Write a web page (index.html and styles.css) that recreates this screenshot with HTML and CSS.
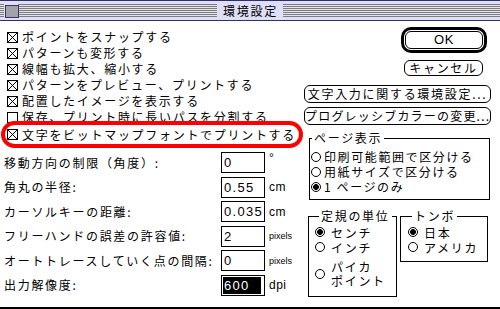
FILE: index.html
```html
<!DOCTYPE html>
<html lang="ja">
<head>
  <meta charset="UTF-8" />
  <title>環境設定</title>
  <link rel="stylesheet" href="styles.css">
</head>
<body>
  <div class="window">
    <div class="titlebar">
      <span class="close-box"></span>
      <span class="title">環境設定</span>
    </div>

    <div class="main">
      <!-- Left: options and values -->
      <div class="left">
        <div class="check"><span class="box on"></span>ポイントをスナップする</div>
        <div class="check"><span class="box on"></span>パターンも変形する</div>
        <div class="check"><span class="box on"></span>線幅も拡大、縮小する</div>
        <div class="check"><span class="box on"></span>パターンをプレビュー、プリントする</div>
        <div class="check"><span class="box on"></span>配置したイメージを表示する</div>
        <div class="check"><span class="box"></span>保存、プリント時に長いパスを分割する</div>
        <div class="check highlight"><span class="box on"></span>文字をビットマップフォントでプリントする</div>

        <div class="fields">
          <div class="field">
            <span class="label">移動方向の制限（角度）:</span>
            <span class="input">0</span>
            <span class="unit deg">°</span>
          </div>
          <div class="field">
            <span class="label">角丸の半径:</span>
            <span class="input">0.55</span>
            <span class="unit">cm</span>
          </div>
          <div class="field">
            <span class="label">カーソルキーの距離:</span>
            <span class="input">0.035</span>
            <span class="unit">cm</span>
          </div>
          <div class="field">
            <span class="label">フリーハンドの誤差の許容値:</span>
            <span class="input">2</span>
            <span class="unit small">pixels</span>
          </div>
          <div class="field">
            <span class="label">オートトレースしていく点の間隔:</span>
            <span class="input">0</span>
            <span class="unit small">pixels</span>
          </div>
          <div class="field">
            <span class="label">出力解像度:</span>
            <span class="input selected"><span class="sel">600</span></span>
            <span class="unit">dpi</span>
          </div>
        </div>
      </div>

      <!-- Right: buttons and groups -->
      <div class="right">
        <div class="ok-ring"><button class="btn ok">OK</button></div>
        <button class="btn cancel">キャンセル</button>
        <button class="btn wide">文字入力に関する環境設定...</button>
        <button class="btn wide tight">プログレッシブカラーの変更...</button>

        <fieldset class="group page">
          <legend>ページ表示</legend>
          <div class="radio"><span class="dot"></span>印刷可能範囲で区分ける</div>
          <div class="radio"><span class="dot"></span>用紙サイズで区分ける</div>
          <div class="radio"><span class="dot on"></span>1 ページのみ</div>
        </fieldset>

        <div class="groups">
          <fieldset class="group units">
            <legend>定規の単位</legend>
            <div class="radio"><span class="dot on"></span>センチ</div>
            <div class="radio"><span class="dot"></span>インチ</div>
            <div class="radio two"><span class="dot"></span><span>パイカ<br>ポイント</span></div>
          </fieldset>
          <fieldset class="group trim">
            <legend>トンボ</legend>
            <div class="radio"><span class="dot on"></span>日本</div>
            <div class="radio"><span class="dot"></span>アメリカ</div>
          </fieldset>
        </div>
      </div>
    </div>

    <div class="bottom-bar"></div>
  </div>
</body>
</html>
```

FILE: styles.css
```css
* { box-sizing: border-box; }
body {
  margin: 0;
  background: #fff;
  color: #000;
  font-family: "Noto Sans CJK JP", sans-serif;
  font-size: 12px;
  letter-spacing: 1.7px;
}

.window {
  width: 500px;
  height: 309px;
  display: flex;
  flex-direction: column;
  overflow: hidden;
}

/* title bar */
.titlebar {
  height: 21px;
  border-top: 1px solid #2e2e70;
  border-bottom: 1px solid #2e2e70;
  background-color: #dedef6;
  background-image: repeating-linear-gradient(to bottom, #7c7c7c 0 1px, #e4e4ee 1px 2px);
  background-size: 100% 13px;
  background-position: 0 3px;
  background-repeat: no-repeat;
  display: grid;
  grid-template-columns: 1fr auto 1fr;
  align-items: center;
}
.close-box {
  justify-self: start;
  margin-left: 4px;
  width: 14px;
  height: 13px;
  padding: 1px;
  background: #dedef6;
}
.close-box::after {
  content: "";
  display: block;
  width: 100%;
  height: 100%;
  border: 1px solid #34346e;
  background: #a2a2a8;
}
.title {
  background: #dedef6;
  padding: 0 5px 0 6px;
  line-height: 19px;
}

.main {
  flex: 1;
  display: flex;
}
.left {
  width: 304px;
  padding-top: 8px;
}
.right {
  width: 196px;
}

/* check boxes */
.check {
  display: flex;
  align-items: center;
  gap: 4px;
  height: 16px;
  line-height: 16px;
  padding-left: 7px;
  white-space: nowrap;
}
.box {
  flex: none;
  width: 11px;
  height: 11px;
  border: 1px solid #000;
}
.box.on {
  background:
    linear-gradient(45deg, transparent 46%, #000 46% 54%, transparent 54%),
    linear-gradient(-45deg, transparent 46%, #000 46% 54%, transparent 54%);
}
.highlight {
  position: relative;
  width: 302px;
  height: 27px;
  margin: -4px 0 0 1px;
  padding-left: 2px;
  border: 4px solid #f00;
  border-radius: 14px;
  background: #fff;
}

/* value fields */
.fields {
  display: flex;
  flex-direction: column;
  gap: 3.5px;
  margin-top: 4px;
  padding-left: 4px;
}
.field {
  display: flex;
  align-items: center;
  height: 21px;
  line-height: 16px;
  white-space: nowrap;
}
.label { width: 217px; }
.input {
  width: 44px;
  height: 21px;
  border: 1px solid #000;
  padding-left: 2px;
  font-family: "Liberation Sans", sans-serif;
  font-size: 13px;
  letter-spacing: 1.3px;
  line-height: 19px;
}
.input.selected { padding: 1px; }
.sel {
  display: block;
  width: 38px;
  height: 100%;
  padding-left: 1px;
  background: #000;
  color: #fff;
  line-height: 17px;
}
.unit {
  margin-left: 4px;
  font-family: "Liberation Sans", sans-serif;
  font-size: 12px;
  letter-spacing: 0.5px;
}
.unit.deg { align-self: flex-start; line-height: 12px; }
.unit.small { font-size: 9px; letter-spacing: 0; }

/* buttons */
.btn {
  display: block;
  padding: 0;
  background: #fff;
  color: #000;
  border: 1px solid #000;
  border-radius: 6px;
  font: inherit;
  letter-spacing: inherit;
  white-space: nowrap;
  line-height: 14px;
}
.ok-ring {
  width: 86px;
  height: 26px;
  margin: 6px 0 0 97px;
  padding: 1px;
  border: 3px solid #000;
  border-radius: 10px;
}
.ok {
  width: 100%;
  height: 100%;
  font-family: "Liberation Sans", sans-serif;
  font-size: 13px;
  letter-spacing: 0.5px;
}
.cancel {
  width: 79px;
  height: 16px;
  margin: 7px 0 0 100px;
}
.wide {
  width: 187px;
  height: 18px;
  margin-top: 9px;
}
.wide.tight {
  margin-top: 4px;
  letter-spacing: 1.2px;
}

/* groups */
.group {
  margin: 0;
  padding: 0;
  min-width: 0;
  border: 1px solid #000;
}
.group legend {
  padding: 0 2px;
  line-height: 12px;
}
.page {
  width: 181px;
  margin: 7px 0 0 5px;
  padding: 5px 0 5px 1px;
}
.page legend { margin-left: 1px; }
.page .radio { gap: 3px; letter-spacing: 1.6px; }

.groups {
  display: flex;
  align-items: flex-start;
  margin-top: 10px;
}
.units {
  width: 89px;
  margin-left: 4px;
  padding: 2.5px 0 8px 6px;
}
.trim {
  width: 88px;
  margin-left: 3px;
  padding: 2.5px 0 6px 7px;
}
.units legend, .trim legend { margin-left: 4px; }

.radio {
  display: flex;
  align-items: center;
  gap: 6px;
  height: 15px;
  line-height: 15px;
  white-space: nowrap;
}
.radio.two {
  height: 28px;
  margin-top: 5.5px;
  line-height: 14px;
}
.dot {
  flex: none;
  width: 10px;
  height: 10px;
  border: 1px solid #000;
  border-radius: 50%;
}
.dot.on {
  background: radial-gradient(circle, #000 0 2.6px, transparent 3.2px);
}

.bottom-bar {
  height: 2px;
  background: #000;
}
```
